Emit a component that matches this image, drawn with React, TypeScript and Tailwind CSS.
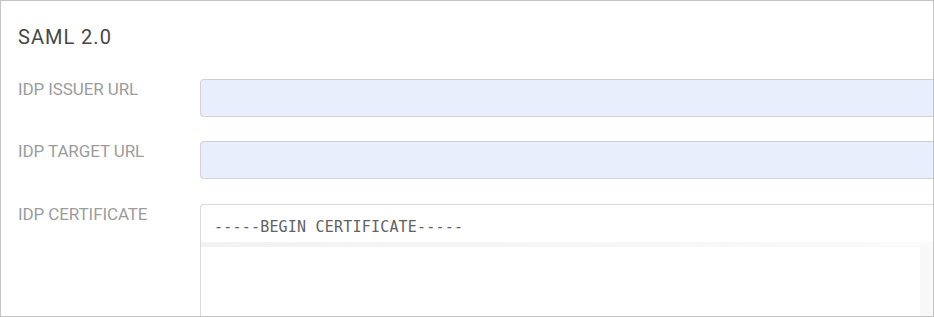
import React from 'react';

const fields = [
  { label: 'IDP ISSUER URL' },
  { label: 'IDP TARGET URL' },
];

function Label({ children }: { children: React.ReactNode }) {
  return (
    <div className="w-[182px] shrink-0 text-[17px] leading-5 tracking-[-0.1px] text-[#9c9c9c]">
      {children}
    </div>
  );
}

export default function App() {
  return (
    <div
      className="h-[317px] w-[934px] overflow-hidden border border-[#c4c4c4] bg-white pl-[17px] pt-[22px]"
      style={{ fontFamily: 'Roboto, "Liberation Sans", sans-serif' }}
    >
      <h2 className="text-[20px] leading-7 tracking-[1px] text-[#474747]">SAML 2.0</h2>

      <div className="mt-[28px] flex flex-col">
        {fields.map((f, i) => (
          <div key={f.label} className={`flex items-start ${i === 0 ? 'mb-[24px]' : 'mb-[25px]'}`}>
            <Label>{f.label}</Label>
            <input
              type="text"
              className="h-[38px] flex-1 rounded-l-[4px] border border-r-0 border-[#d3d3d6] border-t-[#cfcfd2] bg-[#e9eefd] outline-none"
            />
          </div>
        ))}

        <div className="flex items-start">
          <Label>IDP CERTIFICATE</Label>
          <div className="h-[140px] flex-1 rounded-tl-[4px] border-l border-t border-[#dadada] bg-white">
            <div
              className="pl-[13px] pt-[12px] text-[15px] leading-5 tracking-[0.2px] text-[#626262]"
              style={{ fontFamily: '"DejaVu Sans Mono", "Liberation Mono", monospace' }}
            >
              -----BEGIN CERTIFICATE-----
            </div>
            <div className="mt-[5px] h-[5px] bg-gradient-to-r from-[#f2f2f2] via-[#f6f6f6] to-[#fafafa]" />
            <div className="flex h-full justify-end">
              <div className="w-[13px] bg-[#f8f8f8]" />
            </div>
          </div>
        </div>
      </div>
    </div>
  );
}
